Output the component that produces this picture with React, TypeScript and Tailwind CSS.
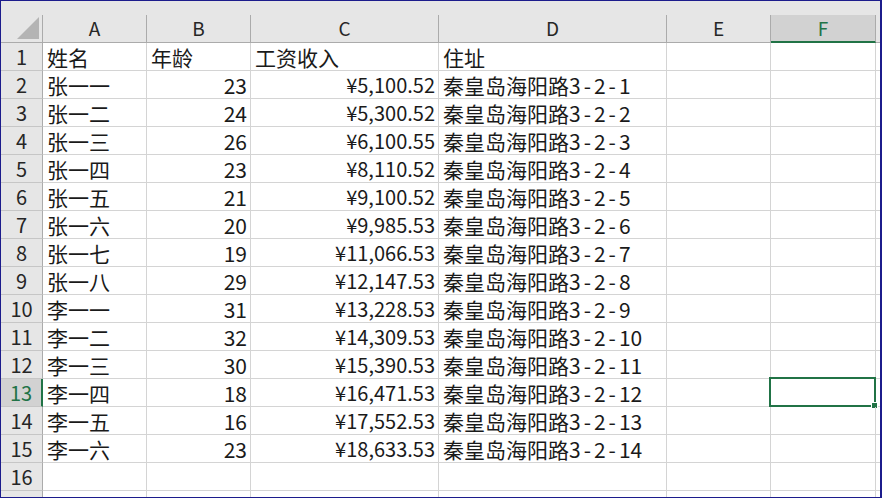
import React from 'react';

const cols = [
  { key: 'A', w: 'w-[104px]' },
  { key: 'B', w: 'w-[104px]' },
  { key: 'C', w: 'w-[188px]' },
  { key: 'D', w: 'w-[228px]' },
  { key: 'E', w: 'w-[104px]' },
  { key: 'F', w: 'w-[105px]' },
];

const people = [
  ['张一一', '23', '¥5,100.52', '秦皇岛海阳路3-2-1'],
  ['张一二', '24', '¥5,300.52', '秦皇岛海阳路3-2-2'],
  ['张一三', '26', '¥6,100.55', '秦皇岛海阳路3-2-3'],
  ['张一四', '23', '¥8,110.52', '秦皇岛海阳路3-2-4'],
  ['张一五', '21', '¥9,100.52', '秦皇岛海阳路3-2-5'],
  ['张一六', '20', '¥9,985.53', '秦皇岛海阳路3-2-6'],
  ['张一七', '19', '¥11,066.53', '秦皇岛海阳路3-2-7'],
  ['张一八', '29', '¥12,147.53', '秦皇岛海阳路3-2-8'],
  ['李一一', '31', '¥13,228.53', '秦皇岛海阳路3-2-9'],
  ['李一二', '32', '¥14,309.53', '秦皇岛海阳路3-2-10'],
  ['李一三', '30', '¥15,390.53', '秦皇岛海阳路3-2-11'],
  ['李一四', '18', '¥16,471.53', '秦皇岛海阳路3-2-12'],
  ['李一五', '16', '¥17,552.53', '秦皇岛海阳路3-2-13'],
  ['李一六', '23', '¥18,633.53', '秦皇岛海阳路3-2-14'],
];

const rows: string[][] = [
  ['姓名', '年龄', '工资收入', '住址', '', ''],
  ...people.map((p) => [...p, '', '']),
  ['', '', '', '', '', ''],
  ['', '', '', '', '', ''],
];

const font = { fontFamily: '"Noto Sans CJK SC", "Noto Sans", sans-serif' };

// hyphens in the address get a little extra room, like the sheet's font
function Text({ value }: { value: string }) {
  const parts = value.split(/(-)/);
  return (
    <>
      {parts.map((p, i) =>
        p === '-' ? (
          <span key={i} className="px-[3px]">-</span>
        ) : (
          <span key={i}>{p}</span>
        )
      )}
    </>
  );
}

function Cell({ value, w, right, small, selected }: { value: string; w: string; right: boolean; small: boolean; selected: boolean }) {
  return (
    <div
      className={`${w} relative h-full shrink-0 flex items-end pb-[1px] border-r border-b border-[#d4d4d4] leading-[24px] text-[#1a1a1a] whitespace-nowrap ${
        small ? 'text-[20px]' : 'text-[21px]'
      } ${right ? 'justify-end pr-[3px]' : 'justify-start pl-[4px]'}`}
    >
      <Text value={value} />
      {selected && (
        <div className="absolute -left-[2px] -top-[2px] -right-[1px] -bottom-[1px] border-2 border-[#217346]">
          <div className="absolute -right-[4px] -bottom-[4px] w-[7px] h-[7px] bg-[#217346] border border-white" />
        </div>
      )}
    </div>
  );
}

export default function App() {
  return (
    <div className="w-[882px] h-[498px] bg-white overflow-hidden border-l border-t border-r-2 border-b border-[#1c1c8c]" style={font}>
      <div className="h-[14px] bg-[#e6e6e6]" />
      {/* column headers */}
      <div className="flex h-[28px] bg-[#e6e6e6]">
        <div className="w-[42px] shrink-0 relative border-r border-b border-[#ababab]">
          <svg className="absolute right-[3px] bottom-[3px]" width="22" height="22" viewBox="0 0 22 22">
            <polygon points="22,0 22,22 0,22" fill="#b4b4b4" />
          </svg>
        </div>
        {cols.map((c) => (
          <div
            key={c.key}
            className={`${c.w} shrink-0 flex items-center justify-center text-[19px] ${
              c.key === 'F'
                ? 'bg-[#d2d2d2] text-[#217346] border-r border-[#ababab] border-b-2 border-b-[#217346]'
                : 'text-[#262626] border-r border-b border-[#ababab]'
            }`}
          >
            {c.key}
          </div>
        ))}
        <div className="flex-1 border-b border-[#ababab]" />
      </div>
      {/* rows */}
      {rows.map((r, i) => {
        const n = i + 1;
        const active = n === 13;
        return (
          <div key={n} className="flex h-[28px]">
            <div
              className={`w-[42px] shrink-0 flex items-end justify-center pb-[1px] text-[20px] leading-[24px] border-b border-[#c6c6c6] ${
                active
                  ? 'bg-[#d2d2d2] text-[#217346] border-r-2 border-r-[#217346]'
                  : 'bg-[#e6e6e6] text-[#262626] border-r border-r-[#ababab]'
              }`}
            >
              {n <= 16 ? n : ''}
            </div>
            {cols.map((c, j) => (
              <Cell
                key={c.key}
                value={r[j]}
                w={c.w}
                right={n > 1 && (j === 1 || j === 2)}
                small={n > 1 && j === 2}
                selected={active && c.key === 'F'}
              />
            ))}
            <div className="flex-1 border-b border-[#d4d4d4]" />
          </div>
        );
      })}
    </div>
  );
}
